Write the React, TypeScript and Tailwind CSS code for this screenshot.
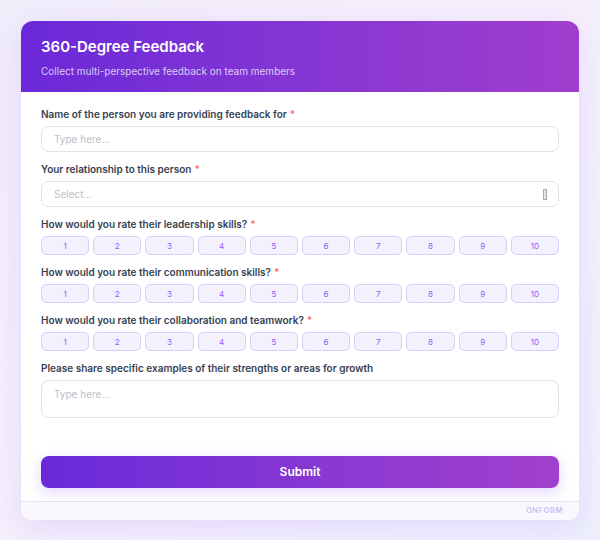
const ratings = [1, 2, 3, 4, 5, 6, 7, 8, 9, 10];

function Label({ text, required }: { text: string; required?: boolean }) {
  return (
    <label className="block text-[10px] leading-[14px] font-semibold text-[#374151] mb-[5px]">
      {text}
      {required && <span className="text-[#f87171] ml-[3px]">*</span>}
    </label>
  );
}

function RatingRow({ label }: { label: string }) {
  return (
    <div>
      <Label text={label} required />
      <div className="grid grid-cols-10 gap-[4px]">
        {ratings.map((n) => (
          <button
            key={n}
            className="h-[19px] rounded-[5px] border border-[#d8cefc] bg-[#f4f1ff] text-[8px] text-[#8b5cf6] leading-none"
          >
            {n}
          </button>
        ))}
      </div>
    </div>
  );
}

export default function App() {
  return (
    <div
      className="min-h-[540px] w-[600px] bg-gradient-to-br from-[#f1edfb] via-[#f6effc] to-[#eef0fd] p-[21px]"
      style={{ fontFamily: 'Inter, "Noto Sans", sans-serif' }}
    >
      <div className="rounded-[12px] bg-white overflow-hidden shadow-[0_8px_30px_rgba(139,92,246,0.16)]">
        {/* Header */}
        <div className="h-[71px] bg-gradient-to-r from-[#6b28d8] to-[#a03dce] px-5 pt-[16px]">
          <h1 className="text-[15px] leading-[20px] font-semibold text-white">360-Degree Feedback</h1>
          <p className="mt-[7px] text-[10px] leading-[14px] text-white/75">
            Collect multi-perspective feedback on team members
          </p>
        </div>

        {/* Body */}
        <div className="px-5 pt-[15px] pb-[13px] flex flex-col gap-[10px]">
          <div>
            <Label text="Name of the person you are providing feedback for" required />
            <div className="h-[26px] rounded-[7px] border-[1.5px] border-[#e2e1ea] flex items-center px-3 text-[10px] text-[#bdbdc6]">
              Type here...
            </div>
          </div>

          <div>
            <Label text="Your relationship to this person" required />
            <div className="h-[26px] rounded-[7px] border-[1.5px] border-[#e2e1ea] flex items-center justify-between pl-3 pr-[11px] text-[10px] text-[#bdbdc6]">
              <span>Select...</span>
              <span className="w-[4px] h-[11px] border border-[#a8a8b0] bg-[#e4e4e8]" />
            </div>
          </div>

          <RatingRow label="How would you rate their leadership skills?" />
          <RatingRow label="How would you rate their communication skills?" />
          <RatingRow label="How would you rate their collaboration and teamwork?" />

          <div>
            <Label text="Please share specific examples of their strengths or areas for growth" />
            <div className="h-[38px] rounded-[7px] border-[1.5px] border-[#e2e1ea] px-3 pt-[6px] text-[10px] text-[#bdbdc6]">
              Type here...
            </div>
          </div>

          <button className="mt-[28px] h-[32px] rounded-[8px] bg-gradient-to-r from-[#6a28d9] to-[#a23fcd] text-white text-[12px] font-semibold shadow-[0_4px_14px_rgba(139,92,246,0.25)]">
            Submit
          </button>
        </div>

        {/* Footer */}
        <div className="h-[19px] border-t border-[#e5e3ee] bg-[#f9f8fe] flex items-center justify-end pr-[16px]">
          <span className="text-[7.5px] font-semibold tracking-[0.08em] text-[#c9bdf7]">ONFORM</span>
        </div>
      </div>
    </div>
  );
}
